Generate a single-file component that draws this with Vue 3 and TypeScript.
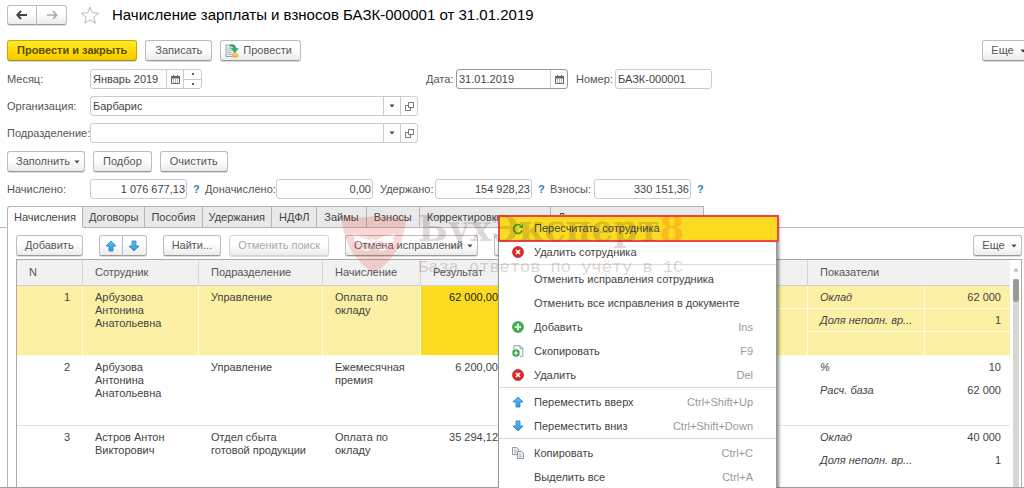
<script setup lang="ts">
import { ref } from 'vue'

interface Indicator { name: string; value: string }
interface Row {
  n: number
  employee: string
  department: string
  accrual: string
  result: string
  indicators: Indicator[]
}
interface MenuItem {
  label: string
  icon?: string
  keys?: string
  separated?: boolean
  active?: boolean
}

const month = ref('Январь 2019')
const date = ref('31.01.2019')
const docNumber = ref('БАЗК-000001')
const organization = ref('Барбарис')
const department = ref('')

const totals = ref([
  { id: 'accrued', label: 'Начислено:', value: '1 076 677,13', help: true },
  { id: 'extra', label: 'Доначислено:', value: '0,00', help: false },
  { id: 'withheld', label: 'Удержано:', value: '154 928,23', help: true },
  { id: 'contributions', label: 'Взносы:', value: '330 151,36', help: true },
])

const tabs: string[] = [
  'Начисления', 'Договоры', 'Пособия', 'Удержания', 'НДФЛ', 'Займы', 'Взносы',
  'Корректировки выплат', 'Дополнительные сведения',
]
const activeTab = ref(0)

const rows: Row[] = [
  {
    n: 1, employee: 'Арбузова Антонина Анатольевна', department: 'Управление',
    accrual: 'Оплата по окладу', result: '62 000,00',
    indicators: [{ name: 'Оклад', value: '62 000' }, { name: 'Доля неполн. вр...', value: '1' }, { name: '', value: '' }],
  },
  {
    n: 2, employee: 'Арбузова Антонина Анатольевна', department: 'Управление',
    accrual: 'Ежемесячная премия', result: '6 200,00',
    indicators: [{ name: '%', value: '10' }, { name: 'Расч. база', value: '62 000' }, { name: '', value: '' }],
  },
  {
    n: 3, employee: 'Астров Антон Викторович', department: 'Отдел сбыта готовой продукции',
    accrual: 'Оплата по окладу', result: '35 294,12',
    indicators: [{ name: 'Оклад', value: '40 000' }, { name: 'Доля неполн. вр...', value: '1' }, { name: '', value: '' }],
  },
]
const selected = ref(1)

const menu: MenuItem[] = [
  { label: 'Пересчитать сотрудника', icon: 'refresh', active: true },
  { label: 'Удалить сотрудника', icon: 'remove' },
  { label: 'Отменить исправления сотрудника', separated: true },
  { label: 'Отменить все исправления в документе' },
  { label: 'Добавить', icon: 'add', keys: 'Ins' },
  { label: 'Скопировать', icon: 'clone', keys: 'F9' },
  { label: 'Удалить', icon: 'remove', keys: 'Del' },
  { label: 'Переместить вверх', icon: 'up', keys: 'Ctrl+Shift+Up', separated: true },
  { label: 'Переместить вниз', icon: 'down', keys: 'Ctrl+Shift+Down' },
  { label: 'Копировать', icon: 'copy', keys: 'Ctrl+C', separated: true },
  { label: 'Выделить все', keys: 'Ctrl+A' },
]
</script>

<template>
  <div class="app">
    <svg class="defs" width="0" height="0" aria-hidden="true">
      <defs>
        <linearGradient id="blue" x1="0" y1="0" x2="0" y2="1">
          <stop offset="0" stop-color="#5cbcf2" /><stop offset="1" stop-color="#2f9be0" />
        </linearGradient>
        <symbol id="i-caret" viewBox="0 0 6 4"><path d="M0.5 0.5h5L3 3.5z" fill="#444" /></symbol>
        <symbol id="i-up" viewBox="0 0 12 12">
          <path d="M6 1L11 6H8V11H4V6H1z" fill="url(#blue)" stroke="#2380bd" stroke-width="0.8" stroke-linejoin="round" />
        </symbol>
        <symbol id="i-down" viewBox="0 0 12 12">
          <path d="M6 11L1 6H4V1H8V6H11z" fill="url(#blue)" stroke="#2380bd" stroke-width="0.8" stroke-linejoin="round" />
        </symbol>
        <symbol id="i-refresh" viewBox="0 0 12 12">
          <path d="M8.8 2.6A4.4 4.4 0 1 0 10.2 7.4" fill="none" stroke="#45a51f" stroke-width="1.8" />
          <path d="M11 0.6V5H6.600z" fill="#45a51f" />
        </symbol>
        <symbol id="i-remove" viewBox="0 0 12 12">
          <circle cx="6" cy="6" r="5.5" fill="#d92b2f" stroke="#b81c22" stroke-width="0.7" />
          <path d="M4 4l4 4M8 4l-4 4" stroke="#fff" stroke-width="1.6" />
        </symbol>
        <symbol id="i-add" viewBox="0 0 12 12">
          <circle cx="6" cy="6" r="5.5" fill="#41b350" stroke="#2c933b" stroke-width="0.7" />
          <path d="M6 2.8v6.4M2.8 6h6.4" stroke="#fff" stroke-width="1.7" />
        </symbol>
        <symbol id="i-clone" viewBox="0 0 12 12">
          <path d="M2 4V0.6h6L10.8 3.4V11.4H7.5" fill="#fff" stroke="#8494a3" stroke-width="0.9" />
          <path d="M8 0.6V3.4h2.8" fill="none" stroke="#8494a3" stroke-width="0.9" />
          <circle cx="4" cy="8" r="3.7" fill="#35a345" />
          <path d="M4 5.8v4.4M1.8 8h4.4" stroke="#fff" stroke-width="1.2" />
        </symbol>
        <symbol id="i-copy" viewBox="0 0 12 12">
          <path d="M0.5 0.5h4.2L6.5 2.3V7.5h-6z" fill="#eef2f5" stroke="#7e8f9e" stroke-width="0.9" />
          <path d="M2 3h2.5M2 5h3" stroke="#9aa9b6" stroke-width="0.8" />
          <path d="M5.5 4.5h4.2L11.5 6.3v5.2h-6z" fill="#eef2f5" stroke="#7e8f9e" stroke-width="0.9" />
          <path d="M7 7.3h2.5M7 9.3h3" stroke="#8c9cab" stroke-width="0.8" />
        </symbol>
        <symbol id="i-calendar" viewBox="0 0 9 9">
          <path d="M0.5 1.5h8v7h-8z" fill="#fff" stroke="#666" stroke-width="1" />
          <path d="M0 1h9v2.4H0zM2 0h1v1.5H2zM6 0h1v1.5H6z" fill="#666" />
          <path d="M2 5h5M2 7h5" stroke="#777" stroke-width="1" stroke-dasharray="1 1" />
        </symbol>
        <symbol id="i-open" viewBox="0 0 9 9">
          <path d="M3.5 0.5h5v5h-5z" fill="#fff" stroke="#666" stroke-width="0.9" />
          <path d="M3.5 3.5H0.5v5h5V5.5" fill="none" stroke="#666" stroke-width="0.9" />
        </symbol>
        <symbol id="i-post" viewBox="0 0 14 14">
          <path d="M1 1h8.5v11.5H1z" fill="#e9eff4" stroke="#8798a8" stroke-width="0.9" />
          <path d="M2.5 4h4M2.5 6.2h4M2.5 8.4h4M2.5 10.5h4" stroke="#8ba0b3" stroke-width="0.8" />
          <ellipse cx="10" cy="12" rx="3.2" ry="1.6" fill="#e8b93b" />
          <ellipse cx="10" cy="10.5" rx="3.2" ry="1.6" fill="#f6d566" stroke="#d19f2a" stroke-width="0.4" />
          <path d="M5 0.8C9 0.3 10.8 1.5 11 4.5h2.4L9.8 8.7 6 4.5h2.3C8.2 3 7.3 2.2 5 2.4z" fill="#2fb457" stroke="#1c9242" stroke-width="0.4" />
        </symbol>
      </defs>
    </svg>

    <main class="window">
      <header class="title-bar">
        <div class="btn-group">
          <button class="btn nav" type="button" aria-label="Назад">
            <svg width="12" height="10" viewBox="0 0 12 10"><path d="M1 5h10M5 1L1.3 5 5 9" fill="none" stroke="#444" stroke-width="1.9" /></svg>
          </button>
          <button class="btn nav" type="button" aria-label="Вперед">
            <svg width="12" height="10" viewBox="0 0 12 10"><path d="M11 5H1M7 1l3.7 4L7 9" fill="none" stroke="#aaa" stroke-width="1.7" /></svg>
          </button>
        </div>
        <button class="star" type="button" aria-label="В избранное">
          <svg width="20" height="18" viewBox="0 0 20 18"><path d="M10 1l2.3 5.8 6.4.4-5 4 1.7 6L10 13.8 4.6 17.2l1.7-6-5-4 6.4-.4z" fill="#fff" stroke="#b4bcc4" stroke-width="1" /></svg>
        </button>
        <h1>Начисление зарплаты и взносов БАЗК-000001 от 31.01.2019</h1>
      </header>

      <div class="bar commands">
        <button class="btn primary" type="button">Провести и закрыть</button>
        <button class="btn" type="button">Записать</button>
        <button class="btn with-icon" type="button">
          <svg width="14" height="14"><use href="#i-post" /></svg>Провести
        </button>
        <button class="btn more cut" type="button">Еще<svg class="caret"><use href="#i-caret" /></svg></button>
      </div>

      <div class="form-row">
        <label class="lead" for="month">Месяц:</label>
        <div class="field period">
          <input id="month" v-model="month" type="text">
          <button type="button" aria-label="Календарь"><svg width="9" height="9"><use href="#i-calendar" /></svg></button>
          <div class="spin">
            <button type="button" aria-label="Больше"><i></i></button>
            <button type="button" aria-label="Меньше"><i></i></button>
          </div>
        </div>
        <div class="date-group">
          <label class="date-label" for="date">Дата:</label>
          <div class="field period focused">
            <input id="date" v-model="date" type="text">
            <button type="button" aria-label="Календарь"><svg width="9" height="9"><use href="#i-calendar" /></svg></button>
          </div>
          <label class="number-label" for="number">Номер:</label>
          <div class="field amount"><input id="number" v-model="docNumber" type="text"></div>
        </div>
      </div>

      <div class="form-row">
        <label class="lead" for="org">Организация:</label>
        <div class="field wide">
          <select id="org" v-model="organization"><option>Барбарис</option></select>
          <span class="drop"><svg class="caret"><use href="#i-caret" /></svg></span>
          <button type="button" aria-label="Открыть"><svg width="9" height="9"><use href="#i-open" /></svg></button>
        </div>
      </div>

      <div class="form-row">
        <label class="lead" for="dept">Подразделение:</label>
        <div class="field wide">
          <select id="dept" v-model="department"><option value=""></option></select>
          <span class="drop"><svg class="caret"><use href="#i-caret" /></svg></span>
          <button type="button" aria-label="Открыть"><svg width="9" height="9"><use href="#i-open" /></svg></button>
        </div>
      </div>

      <div class="bar fill">
        <button class="btn more" type="button">Заполнить<svg class="caret"><use href="#i-caret" /></svg></button>
        <button class="btn" type="button">Подбор</button>
        <button class="btn" type="button">Очистить</button>
      </div>

      <div class="totals">
        <div v-for="t in totals" :key="t.id" :class="['total', t.id]">
          <label :for="t.id">{{ t.label }}</label>
          <div class="field amount"><input :id="t.id" v-model="t.value" type="text"></div>
          <a v-if="t.help" href="#" class="help">?</a>
        </div>
      </div>

      <nav class="tabs" role="tablist">
        <button
          v-for="(t, i) in tabs" :key="t" type="button" role="tab"
          :class="['tab', { active: activeTab === i }]" :aria-selected="activeTab === i" @click="activeTab = i"
        >{{ t }}</button>
      </nav>

      <section class="panel">
        <div class="bar tools">
          <button class="btn" type="button">Добавить</button>
          <div class="btn-group">
            <button class="btn move" type="button" aria-label="Переместить вверх"><svg width="12" height="12"><use href="#i-up" /></svg></button>
            <button class="btn move" type="button" aria-label="Переместить вниз"><svg width="12" height="12"><use href="#i-down" /></svg></button>
          </div>
          <div class="bar">
            <button class="btn" type="button">Найти...</button>
            <button class="btn" type="button" disabled>Отменить поиск</button>
          </div>
          <button class="btn more" type="button">Отмена исправлений<svg class="caret"><use href="#i-caret" /></svg></button>
          <button class="btn square" type="button" aria-label="Расчетный листок">
            <svg width="12" height="12" viewBox="0 0 12 12"><path d="M0.5 1.5h11v10H0.5zM0.5 4.5h11M4.5 4.5v7" fill="#eef4fa" stroke="#6b8aa8" /></svg>
          </button>
          <button class="btn more last" type="button">Еще<svg class="caret"><use href="#i-caret" /></svg></button>
        </div>

        <div class="grid">
          <table>
            <colgroup>
              <col class="c-n"><col class="c-emp"><col class="c-dep"><col class="c-acc"><col class="c-res">
              <col><col class="c-ind"><col class="c-val">
            </colgroup>
            <thead>
              <tr>
                <th>N</th><th>Сотрудник</th><th>Подразделение</th><th>Начисление</th><th>Результат</th>
                <th></th><th colspan="2">Показатели</th>
              </tr>
            </thead>
            <tbody v-for="r in rows" :key="r.n" :class="{ selected: selected === r.n }" @click="selected = r.n">
              <tr>
                <td rowspan="3" class="num">{{ r.n }}</td>
                <td rowspan="3">{{ r.employee }}</td>
                <td rowspan="3">{{ r.department }}</td>
                <td rowspan="3">{{ r.accrual }}</td>
                <td rowspan="3" class="num current">{{ r.result }}</td>
                <td class="inner"></td>
                <td class="inner name">{{ r.indicators[0].name }}</td>
                <td class="inner num">{{ r.indicators[0].value }}</td>
              </tr>
              <tr>
                <td rowspan="2"></td>
                <td class="inner name">{{ r.indicators[1].name }}</td>
                <td class="inner num">{{ r.indicators[1].value }}</td>
              </tr>
              <tr>
                <td class="name"></td>
                <td class="num"></td>
              </tr>
            </tbody>
          </table>
          <div class="scroll">
            <svg width="6" height="5" viewBox="0 0 6 5"><path d="M3 0.5L5.7 4.5H0.3z" fill="#bbb" /></svg>
            <div class="track"><div class="thumb"></div></div>
          </div>
        </div>
      </section>
    </main>

    <div class="menu" role="menu">
      <button
        v-for="(m, i) in menu" :key="i" type="button" role="menuitem"
        :class="['item', { active: m.active, separated: m.separated }]"
      >
        <span class="icon"><svg v-if="m.icon" width="12" height="12"><use :href="'#i-' + m.icon" /></svg></span>
        <span class="label">{{ m.label }}</span>
        <span v-if="m.keys" class="keys">{{ m.keys }}</span>
      </button>
    </div>

    <div class="watermark">
      <svg width="64" height="58" viewBox="0 0 64 58">
        <path d="M0 2Q16 4 32 1 48 4 64 2C63 26 53 45 32 58 11 45 1 26 0 2z" fill="#e0291f" />
        <path d="M10 19Q25 20 32 27 39 20 54 19 53 22 50 23 53 24 52 26 50 28 47 28" fill="#fff" />
        <path d="M10 19Q11 22 14 23 11 24 12 26 14 28 17 28L32 27z" fill="#fff" />
        <circle cx="24" cy="30" r="5" fill="none" stroke="#fff" stroke-width="2" />
        <circle cx="40" cy="30" r="5" fill="none" stroke="#fff" stroke-width="2" />
        <path d="M30 30h4l-2 5z" fill="#fff" />
      </svg>
      <div class="mark-text">
        <div class="brand">БухЭксперт<b>8</b></div>
        <div class="slogan">База ответов по учёту в 1С</div>
      </div>
    </div>
  </div>
</template>

<style>
body {
  margin: 0;
  background: #fff;
}
</style>

<style scoped>
.app {
  position: relative;
  height: 100vh;
  overflow: hidden;
  background: #fff;
  color: #444;
  font: 11px/13px "Liberation Sans", Arial, sans-serif;
}
.app * { box-sizing: border-box; }
.defs { position: absolute; }
button, input, select { font: inherit; color: inherit; margin: 0; }
svg { flex: none; }
.window {
  display: flex;
  flex-direction: column;
  height: 100%;
  border-bottom: 1px solid #a0a0a0;
}
.title-bar {
  display: flex;
  align-items: center;
  padding: 5px 7px 0;
}
h1 {
  margin: 0 0 0 12px;
  font-size: 15px;
  line-height: 20px;
  font-weight: 400;
  color: #000;
  white-space: nowrap;
}
.star {
  display: flex;
  margin-left: 13px;
  padding: 0;
  border: 0;
  background: none;
}
.btn {
  display: flex;
  align-items: center;
  justify-content: center;
  height: 21px;
  padding: 0 9px;
  border: 1px solid #bdbdbd;
  border-bottom-color: #999;
  border-radius: 3px;
  background: linear-gradient(#fff 40%, #ececec);
  box-shadow: 0 1px 0 #ddd;
  color: #555;
  white-space: nowrap;
}
.btn:disabled { color: #aaa; border-color: #d4d4d4; }
.btn.primary {
  border-color: #c9a800;
  border-bottom-color: #a38a10;
  background: linear-gradient(#ffe82e, #ffd900 60%, #f2c800);
  color: #5a4c00;
  font-weight: 700;
}
.btn.with-icon { gap: 4px; padding: 0 8px 0 4px; }
.tools .btn { padding: 0 8px; }
.btn.more, .tools .btn.more { gap: 4px; padding: 0 4px 0 8px; }
.btn.square { width: 24px; }
.caret { width: 6px; height: 4px; }
.btn-group { display: flex; }
.btn-group .btn { padding: 0; width: 24px; }
.btn-group .btn.nav { width: 30px; height: 20px; }
.btn-group .btn:first-child { border-radius: 3px 0 0 3px; }
.btn-group .btn:last-child { border-radius: 0 3px 3px 0; border-left: 0; }
.bar { display: flex; gap: 8px; }
.commands { padding: 15px 0 0 7px; }
.btn.cut { margin-left: auto; margin-right: -7px; }
.btn.cut, .tools .btn.last { width: 49px; gap: 6px; }
.form-row {
  display: flex;
  align-items: center;
  padding: 7px 0 0 7px;
}
.commands + .form-row { padding-top: 8px; }
label { flex: none; color: #555; white-space: nowrap; }
.lead { width: 83px; }
.date-group {
  display: flex;
  align-items: center;
  margin-left: 224px;
}
.date-label { width: 30px; }
.number-label { width: 47px; padding-left: 8px; }
.field {
  display: flex;
  height: 20px;
  border: 1px solid #ccc;
  border-radius: 3px;
  background: #fff;
}
.field.focused { border-color: #999; }
.field input, .field select {
  flex: 1;
  min-width: 0;
  width: 0;
  padding: 0 2px;
  border: 0;
  background: none;
  outline: 0;
  appearance: none;
}
.field select { margin-right: -17px; padding-right: 19px; }
.field button, .drop {
  display: flex;
  align-items: center;
  justify-content: center;
  width: 17px;
  padding: 0;
  border: 0;
  border-left: 1px solid #ccc;
  background: none;
}
.drop { pointer-events: none; }
.period { width: 112px; }
.amount { width: 97px; }
.wide { width: 328px; }
.spin {
  display: flex;
  flex-direction: column;
  width: 18px;
  border-left: 1px solid #ccc;
}
.field .spin button { flex: 1; width: 100%; border-left: 0; }
.field .spin button + button { border-top: 1px solid #ccc; }
.spin i { width: 2px; height: 2px; background: #666; }
.fill { padding: 8px 0 0 7px; }
.totals {
  display: flex;
  gap: 7px;
  padding: 7px 0 0 7px;
}
.total { display: flex; align-items: center; }
.total input { text-align: right; padding-right: 1px; }
.accrued label { width: 83px; }
.extra label { width: 71px; }
.withheld label { width: 55px; }
.contributions label { width: 44px; }
.help {
  width: 11px;
  padding-left: 6px;
  color: #1f87c9;
  text-decoration: none;
  font-weight: 700;
}
.tabs {
  display: flex;
  padding: 7px 0 0 7px;
  background: linear-gradient(#b5b5b5, #b5b5b5) bottom / 100% 1px no-repeat;
}
.tab {
  height: 22px;
  padding: 0 6px;
  border: 1px solid #b5b5b5;
  border-left: 0;
  background: #e9e9e9;
  white-space: nowrap;
}
.tab:nth-child(n + 5) { padding: 0 7px; }
.tab.active {
  border-left: 1px solid #b5b5b5;
  border-bottom-color: #fff;
  border-radius: 3px 0 0 0;
  background: #fff;
}
.panel {
  flex: 1;
  display: flex;
  flex-direction: column;
  min-height: 0;
  margin-left: 7px;
  padding: 7px 2px 0 8px;
  border-left: 1px solid #b5b5b5;
}
.tools { gap: 16px; }
.tools .btn-group .btn, .tools .btn.square { padding: 0; }
.last { margin-left: auto; }
.grid {
  flex: 1;
  display: flex;
  min-height: 0;
  margin-top: 3px;
  overflow: hidden;
  border: 1px solid #aaa;
  border-bottom: 0;
}
table {
  flex: 1;
  width: 0;
  height: max-content;
  table-layout: fixed;
  border-collapse: separate;
  border-spacing: 0;
}
.c-n { width: 66px; }
.c-emp { width: 116px; }
.c-dep { width: 124px; }
.c-acc { width: 98px; }
.c-res { width: 90px; }
.c-ind { width: 117px; }
.c-val { width: 85px; }
th {
  height: 26px;
  padding: 0 12px;
  border-right: 1px solid #d6d6d6;
  border-bottom: 1px solid #d0d0d0;
  background: #f1f1f1;
  color: #555;
  font-weight: 400;
  text-align: left;
}
th:last-child { border-right: 0; }
td {
  height: 24px;
  padding: 5px 12px 0;
  border-bottom: 1px solid #e2e2e2;
  border-right: 1px solid transparent;
  vertical-align: top;
}
td.inner { height: 23px; border-bottom-color: transparent; white-space: nowrap; }
.num { text-align: right; }
td.num:last-child { padding-right: 9px; border-right: 0; }
.name { font-style: italic; }
.selected td, .selected td.inner { background: #fcf0a4; border-color: #fffbe6; }
.selected td.current { background: #fadb20; color: #222; }
.scroll {
  display: flex;
  flex-direction: column;
  align-items: center;
  gap: 7px;
  width: 11px;
  padding-top: 7px;
}
.track { flex: 1; width: 6px; background: #d6d6d6; }
.thumb { height: 23px; border-radius: 3px; background: #999; }
.menu {
  position: absolute;
  left: 498px;
  top: 215px;
  width: 279px;
  padding-bottom: 4px;
  border-right: 1px solid #999;
  border-left: 1px solid #999;
  background: #fff;
  box-shadow: 2px 2px 3px rgba(0, 0, 0, 0.45);
}
.item {
  display: flex;
  align-items: center;
  width: 100%;
  height: 24px;
  padding: 0 23px 0 13px;
  border: 0;
  background: none;
  text-align: left;
}
.item.active {
  width: 281px;
  height: 27px;
  margin: 0 -2px -2px -1px;
  border: 2px solid #ef4444;
  background: #fadb20;
  padding-left: 12px;
}
.item.separated { height: 27px; padding-top: 2px; border-top: 1px solid #e0dccb; }
.icon { flex: none; display: flex; width: 12px; margin-right: 10px; }
.label { flex: 1; white-space: nowrap; }
.keys { color: #999; }
.watermark {
  position: absolute;
  left: 342px;
  top: 215px;
  display: flex;
  gap: 12px;
  pointer-events: none;
  opacity: 0.18;
}
.brand {
  font: 700 35px/28px "DejaVu Serif", serif;
  color: #50302c;
}
.brand b { color: #ff2a1a; }
.slogan {
  padding-top: 14px;
  font: 17px/22px "Liberation Mono", monospace;
  color: #50201c;
  white-space: nowrap;
}
</style>
